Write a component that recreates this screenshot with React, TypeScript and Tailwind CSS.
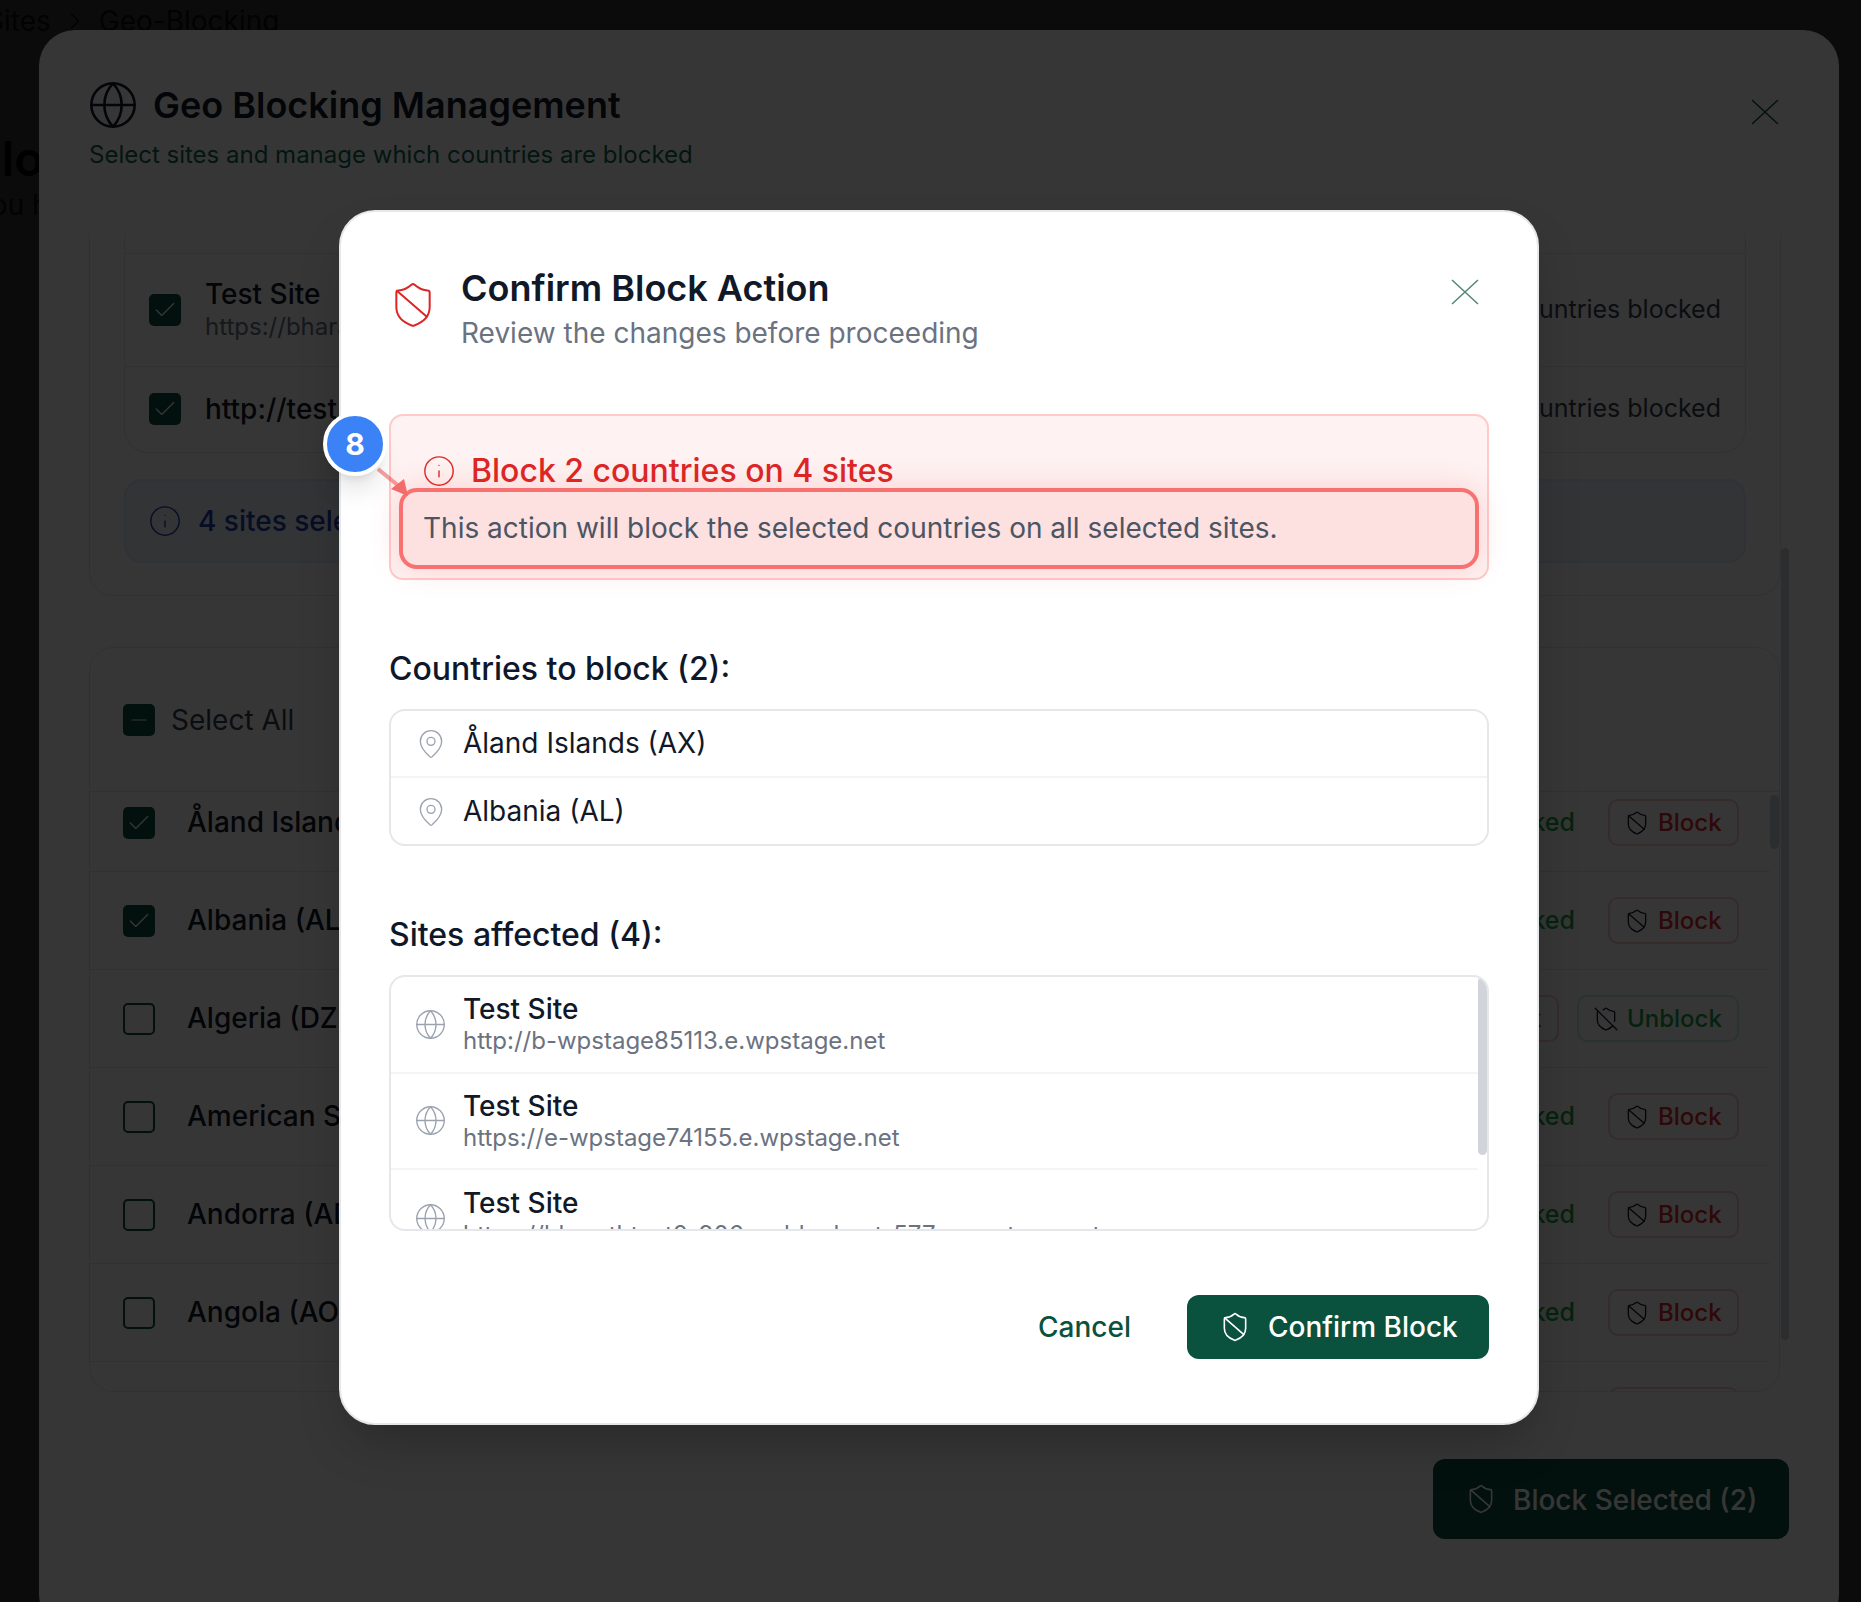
import { ChevronRight, Check, Globe, Info, MapPin, Minus, ShieldBan, ShieldOff } from 'lucide-react'

const countries = [
  { name: 'Åland Islands (AX)', checked: true, status: 'Not blocked', action: 'block' },
  { name: 'Albania (AL)', checked: true, status: 'Not blocked', action: 'block' },
  { name: 'Algeria (DZ)', checked: false, status: 'Partially blocked', action: 'both' },
  { name: 'American Samoa (AS)', checked: false, status: 'Not blocked', action: 'block' },
  { name: 'Andorra (AD)', checked: false, status: 'Not blocked', action: 'block' },
  { name: 'Angola (AO)', checked: false, status: 'Not blocked', action: 'block' },
  { name: 'Anguilla (AI)', checked: false, status: 'Not blocked', action: 'block' },
]

const sites = [
  { name: 'Test Site', url: 'http://b-wpstage85113.e.wpstage.net' },
  { name: 'Test Site', url: 'https://e-wpstage74155.e.wpstage.net' },
  { name: 'Test Site', url: 'https://bharathtest2-906.wpbloghost-577.e.wpstage.net' },
]

function CloseIcon({ className }: { className: string }) {
  return (
    <svg width="28" height="26" viewBox="0 0 28 26" fill="none" stroke="currentColor" strokeWidth="1.5" className={className}>
      <path d="M1 1 L27 25 M27 1 L1 25" />
    </svg>
  )
}

function Checkbox({ checked }: { checked: boolean }) {
  if (checked) {
    return (
      <div className="flex h-[32px] w-[32px] shrink-0 items-center justify-center rounded-[5px] bg-[#0a523e] text-white">
        <Check size={26} strokeWidth={1.2} />
      </div>
    )
  }
  return <div className="h-[32px] w-[32px] shrink-0 rounded-[5px] border-2 border-[#0a523e]" />
}

function BlockButton() {
  return (
    <div className="flex h-[47px] w-[131px] items-center gap-[8px] rounded-[10px] border-2 border-[#fecaca] pl-[14px]">
      <ShieldBan size={26} strokeWidth={1.2} className="text-[#111827]" />
      <span className="text-[24px] font-medium text-[#dc2626]">Block</span>
    </div>
  )
}

function UnblockButton() {
  return (
    <div className="flex h-[47px] w-[162px] items-center gap-[8px] rounded-[10px] border-2 border-[#bbf7d0] pl-[14px]">
      <ShieldOff size={26} strokeWidth={1.2} className="text-[#111827]" />
      <span className="text-[24px] font-medium text-[#16a34a]">Unblock</span>
    </div>
  )
}

function BackgroundPage() {
  return (
    <div className="h-[1602px] w-[1861px] overflow-hidden bg-white text-black">
      <div className="flex h-[101px] items-start gap-[10px] border-b border-[#e5e7eb] pt-[3px] text-[28px] leading-[36px] text-[#374151]">
        <span className="-ml-[14px]">Sites</span>
        <ChevronRight size={28} strokeWidth={1.5} className="mt-[4px]" />
        <span>Geo-Blocking</span>
      </div>
      <div className="-ml-[30px] mt-[30px] text-[48px] font-semibold leading-[56px]">Block</div>
      <div className="-ml-[26px] text-[28px] leading-[36px] text-[#374151]">You have</div>
    </div>
  )
}

function GeoModal() {
  return (
    <div className="absolute left-[39px] top-[30px] flex h-[1600px] w-[1800px] flex-col rounded-[36px] bg-white pl-[50px] pt-[49px]">
      <div className="flex items-center gap-[14px] pl-[1px]">
        <Globe size={52} strokeWidth={1.2} className="-ml-[3px] text-[#111827]" />
        <h1 className="text-[36px] font-semibold leading-[52px] text-[#111827]">Geo Blocking Management</h1>
      </div>
      <p className="mt-[4px] text-[24px] leading-[40px] text-[#0f6b50]">Select sites and manage which countries are blocked</p>
      <CloseIcon className="absolute right-[60px] top-[69px] text-[#0a523e]" />

      <div className="relative mt-[58px] h-[1159px] w-[1700px] overflow-hidden">
        <div className="absolute right-0 top-[315px] h-[792px] w-[8px] rounded-full bg-[#d1d5db]" />

        {/* sites card, scrolled */}
        <div className="w-[1692px] rounded-b-[24px] border border-t-0 border-[#e5e7eb] px-[34px] pb-[32px]">
          <div className="rounded-b-[24px] border border-t-0 border-[#e5e7eb]">
            <div className="h-[21px] border-b border-[#e5e7eb]" />
            <div className="flex h-[113px] items-center gap-[24px] border-b border-[#e5e7eb] px-[24px]">
              <Checkbox checked />
              <div className="flex-1">
                <div className="text-[28px] font-medium leading-[34px] text-[#111827]">Test Site</div>
                <div className="text-[24px] leading-[32px] text-[#6b7280]">https://bharathtest2-906.wpbloghost-577.e.wpstage.net</div>
              </div>
              <span className="text-[25px] text-[#374151]">0 countries blocked</span>
            </div>
            <div className="flex h-[85px] items-center gap-[24px] px-[24px] pb-[2px]">
              <Checkbox checked />
              <div className="flex-1 text-[28px] font-medium text-[#111827]">http://test.wpstage.net</div>
              <span className="text-[25px] text-[#374151]">0 countries blocked</span>
            </div>
          </div>
          <div className="mt-[26px] flex h-[84px] items-center gap-[16px] rounded-[18px] border-2 border-[#dbeafe] bg-[#eff6ff] pl-[22px] text-[#1e40af]">
            <Info size={34} strokeWidth={1} />
            <span className="text-[28px] font-medium">4 sites selected</span>
          </div>
        </div>

        {/* countries card */}
        <div className="mt-[51px] h-[745px] w-[1691px] overflow-hidden rounded-[24px] border border-[#e5e7eb]">
          <div className="flex h-[144px] items-center gap-[16px] border-b border-[#e5e7eb] pl-[33px]">
            <div className="flex h-[32px] w-[32px] items-center justify-center rounded-[5px] bg-[#0a523e] text-white">
              <Minus size={24} strokeWidth={1.2} />
            </div>
            <span className="text-[28px] text-[#374151]">Select All</span>
          </div>
          <div className="relative h-[600px] overflow-hidden">
            <div className="absolute right-[0px] top-[3px] h-[54px] w-[9px] rounded-full bg-[#d1d5db]" />
            <div className="-mt-[18px] pr-[9px]">
              {countries.map((c) => (
                <div key={c.name} className="flex h-[98px] items-center border-b border-[#e5e7eb] pl-[33px] pr-[31px]">
                  <Checkbox checked={c.checked} />
                  <span className="mb-[2px] ml-[32px] flex-1 text-[28px] font-medium text-[#111827]">{c.name}</span>
                  <div className="flex items-center gap-[18px]">
                    <span className="mr-[15px] text-[25px] font-medium text-[#16a34a]">{c.status}</span>
                    <BlockButton />
                    {c.action === 'both' && <UnblockButton />}
                  </div>
                </div>
              ))}
            </div>
          </div>
        </div>
      </div>

      <div className="mr-[50px] mt-[67px] flex justify-end">
        <div className="flex h-[80px] w-[356px] items-center gap-[16px] rounded-[12px] bg-[#0a523e] pl-[32px] text-white">
          <ShieldBan size={32} strokeWidth={1.2} />
          <span className="pt-[1px] text-[28px] font-medium">Block Selected (2)</span>
        </div>
      </div>
    </div>
  )
}

function ConfirmModal() {
  return (
    <div className="absolute left-[339px] top-[210px] h-[1215px] w-[1200px] rounded-[36px] border-2 border-[#e5e7eb] bg-white px-[48px] pt-[55px] shadow-2xl">
      <div className="flex justify-between">
        <div className="flex items-center gap-[23px]">
          <ShieldBan size={50} strokeWidth={0.96} className="-ml-[1px] -mt-[12px] text-[#dc2626]" />
          <div>
            <h2 className="-mt-[1px] text-[36px] font-semibold leading-[44px] text-[#111827]">Confirm Block Action</h2>
            <p className="mt-[2px] text-[28px] leading-[42px] text-[#6b7280]">Review the changes before proceeding</p>
          </div>
        </div>
        <CloseIcon className="mr-[10px] mt-[12px] text-[#0a523e]/70" />
      </div>

      <div className="mt-[60px] h-[166px] rounded-[14px] border-2 border-[#fecaca] bg-[#fef2f2] px-[8px] pt-[35px]">
        <div className="flex h-[40px] items-center gap-[15px] pl-[23px]">
          <Info size={34} strokeWidth={1} className="text-[#dc2626]" />
          <span className="text-[32px] font-medium leading-[40px] text-[#dc2626]">Block 2 countries on 4 sites</span>
        </div>
        <div className="-mt-[3px] flex h-[81px] items-center rounded-[18px] border-4 border-[#f87171] bg-[#fde0e0] pb-[2px] pl-[20px] shadow-[0_0_30px_rgba(239,68,68,0.2)]">
          <p className="text-[28px] text-[#4b5563]">This action will block the selected countries on all selected sites.</p>
        </div>
      </div>

      <h3 className="mt-[69px] text-[32px] font-medium leading-[40px] text-[#0f172a]">Countries to block (2):</h3>
      <div className="mt-[20px] h-[137px] rounded-[16px] border-2 border-[#e5e7eb]">
        {['Åland Islands (AX)', 'Albania (AL)'].map((name, i) => (
          <div key={name} className={`flex h-[67px] items-center gap-[16px] pl-[24px] ${i === 0 ? 'border-b-2 border-[#f3f4f6]' : ''}`}>
            <MapPin size={32} strokeWidth={1} className="text-[#9ca3af]" />
            <span className="mb-[2px] text-[28px] leading-[36px] text-[#111827]">{name}</span>
          </div>
        ))}
      </div>

      <h3 className="mt-[69px] text-[32px] font-medium leading-[40px] text-[#0f172a]">Sites affected (4):</h3>
      <div className="relative mt-[20px] h-[256px] overflow-hidden rounded-[16px] border-2 border-[#e5e7eb] pr-[9px]">
        <div className="absolute right-0 top-0 h-[178px] w-[9px] rounded-full bg-[#d1d5db]" />
        {sites.map((s) => (
          <div key={s.url} className="flex h-[96.5px] shrink-0 items-center gap-[16px] border-b-2 border-[#f3f4f6] pl-[23px] last:border-b-0">
            <Globe size={33} strokeWidth={1} className="text-[#9ca3af]" />
            <div>
              <div className="text-[28px] font-medium leading-[34px] text-[#111827]">{s.name}</div>
              <div className="text-[24px] leading-[30px] text-[#6b7280]">{s.url}</div>
            </div>
          </div>
        ))}
      </div>

      <div className="mt-[64px] flex items-center justify-end gap-[56px]">
        <span className="text-[28px] font-medium text-[#0a523e]">Cancel</span>
        <div className="flex h-[64px] w-[302px] items-center gap-[17px] rounded-[12px] bg-[#0a523e] pl-[32px] text-white">
          <ShieldBan size={32} strokeWidth={1.2} />
          <span className="text-[28px] font-medium">Confirm Block</span>
        </div>
      </div>
    </div>
  )
}

export default function App() {
  return (
    <div className="relative h-[1602px] w-[1861px] overflow-hidden [font-family:Inter,sans-serif]">
      <BackgroundPage />
      <div className="absolute inset-0 bg-black/[0.79]" />
      <GeoModal />
      <div className="absolute inset-0 bg-black/[0.79]" />
      <ConfirmModal />

      {/* annotation pointer over the alert */}
      <svg className="absolute left-[370px] top-[460px]" width="50" height="45" viewBox="0 0 50 45" fill="none">
        <path d="M8 9 L30 27" stroke="#ef4444" strokeOpacity="0.5" strokeWidth="4" />
        <path d="M34 19 L21 29 L38 36 Z" fill="#f26c6c" />
      </svg>
      <div className="absolute left-[323px] top-[412px] flex h-[64px] w-[64px] items-center justify-center rounded-full border-4 border-white bg-[#3b82f6] text-[30px] font-bold text-white shadow-xl">
        8
      </div>
    </div>
  )
}
